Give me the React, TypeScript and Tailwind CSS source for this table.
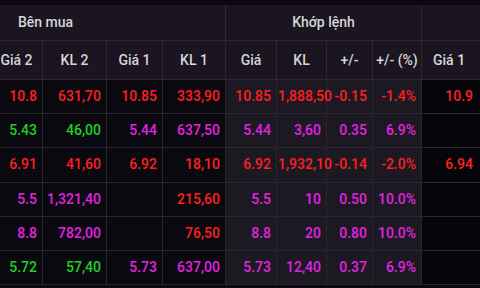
const R = "text-[#ff1f1f]";
const G = "text-[#20d020]";
const M = "text-[#e024e0]";

type Cell = [string, string];

const rows: Cell[][] = [
  [["10.8", R], ["631,70", R], ["10.85", R], ["333,90", R], ["10.85", R], ["1,888,50", R], ["-0.15", R], ["-1.4%", R], ["10.9", R]],
  [["5.43", G], ["46,00", G], ["5.44", M], ["637,50", M], ["5.44", M], ["3,60", M], ["0.35", M], ["6.9%", M], ["", M]],
  [["6.91", R], ["41,60", R], ["6.92", R], ["18,10", R], ["6.92", R], ["1,932,10", R], ["-0.14", R], ["-2.0%", R], ["6.94", R]],
  [["5.5", M], ["1,321,40", M], ["", M], ["215,60", R], ["5.5", M], ["10", M], ["0.50", M], ["10.0%", M], ["", M]],
  [["8.8", M], ["782,00", M], ["", M], ["76,50", R], ["8.8", M], ["20", M], ["0.80", M], ["10.0%", M], ["", M]],
  [["5.72", G], ["57,40", G], ["5.73", M], ["637,00", M], ["5.73", M], ["12,40", M], ["0.37", M], ["6.9%", M], ["", M]],
];

const heads = ["Giá 2", "KL 2", "Giá 1", "KL 1", "Giá", "KL", "+/-", "+/- (%)", "Giá 1"];

const cellBg = (i: number) =>
  i >= 4 && i <= 7 ? "bg-[#1c1923]" : i === 8 ? "bg-[#050408]" : "bg-[#0b0910]";

export default function App() {
  return (
    <div
      className="w-[480px] h-[288px] overflow-hidden bg-[#0b0910]"
      style={{ fontFamily: "Roboto, 'Noto Sans', sans-serif" }}
    >
      <div className="h-[5px] bg-[#0a080d]" />
      <div className="-ml-[9px] w-[540px] grid grid-cols-[52px_64px_56px_63px_51px_50px_46px_49px_109px] text-[14px] font-medium">
        <div className="col-span-4 h-[36px] flex items-center pl-[27px] text-[#d6d6d6] bg-[#1a1520] border-r border-b border-[#2d2933]">
          Bên mua
        </div>
        <div className="col-span-4 h-[36px] flex items-center justify-center text-[#d6d6d6] bg-[#1a1520] border-r border-b border-[#2d2933]">
          Khớp lệnh
        </div>
        <div className="h-[36px] bg-[#1a1520] border-b border-[#2d2933]" />
        {heads.map((h, i) => (
          <div
            key={i}
            className={`h-[39px] flex items-center text-[#d6d6d6] bg-[#1a1520] border-b border-[#2d2933] ${
              i === 8 ? "pl-[11px]" : "justify-center border-r"
            }`}
          >
            {h}
          </div>
        ))}
        {rows.map((row, r) =>
          row.map(([v, c], i) => (
            <div
              key={`${r}-${i}`}
              className={`h-[34.2px] leading-[33px] text-right whitespace-nowrap border-b border-[#2a2630] ${cellBg(i)} ${c} ${
                i === 8
                  ? "pr-[58px]"
                  : i === 5
                  ? "relative z-10 pl-[1px] pr-[5px] border-r"
                  : "pl-[2px] pr-[5px] border-r"
              }`}
            >
              {v}
            </div>
          ))
        )}
      </div>
    </div>
  );
}
